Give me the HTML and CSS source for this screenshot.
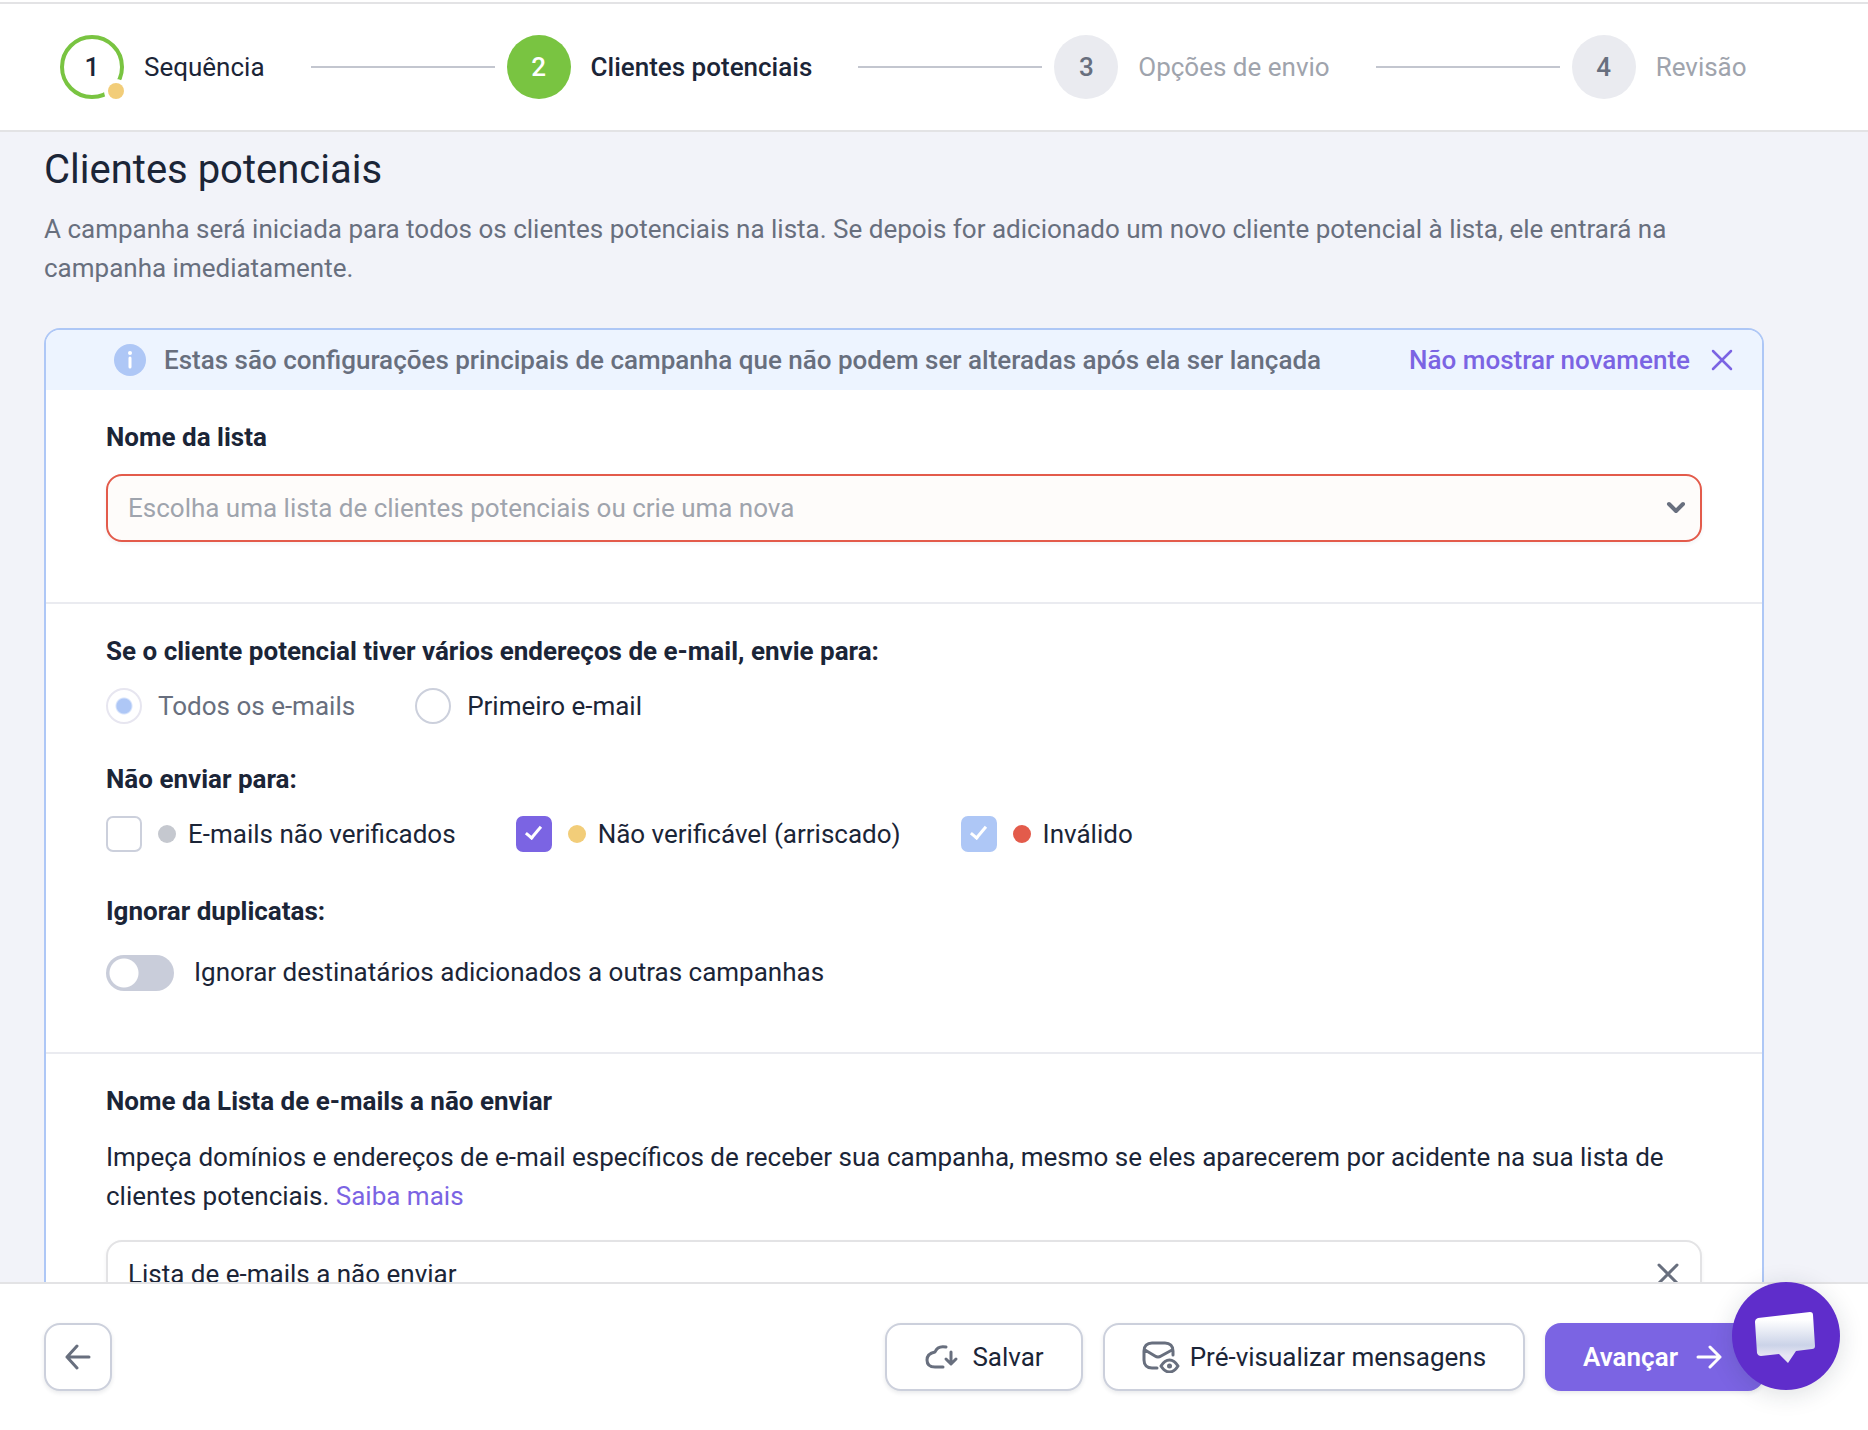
FILE: index.html
```html
<!DOCTYPE html>
<html lang="pt-BR">
<head>
  <meta charset="UTF-8">
  <meta name="viewport" content="width=device-width, initial-scale=1.0">
  <title>Clientes potenciais</title>
  <link rel="stylesheet" href="styles.css">
</head>
<body>
  <header class="steps">
    <a href="#" class="step done">
      <span class="step-number">1</span>
      <span class="step-name">Sequência</span>
    </a>
    <span class="step-line"></span>
    <a href="#" class="step current">
      <span class="step-number">2</span>
      <span class="step-name">Clientes potenciais</span>
    </a>
    <span class="step-line"></span>
    <a href="#" class="step">
      <span class="step-number">3</span>
      <span class="step-name">Opções de envio</span>
    </a>
    <span class="step-line"></span>
    <a href="#" class="step">
      <span class="step-number">4</span>
      <span class="step-name">Revisão</span>
    </a>
  </header>

  <main class="content">
    <h1>Clientes potenciais</h1>
    <p class="intro">A campanha será iniciada para todos os clientes potenciais na lista. Se depois for adicionado um novo cliente potencial à lista, ele entrará na campanha imediatamente.</p>

    <form class="card">
      <div class="notice">
        <svg class="info-icon" viewBox="0 0 32 32" width="32" height="32">
          <circle cx="16" cy="16" r="16" fill="#aec7f6"/>
          <circle cx="16" cy="9" r="2" fill="#fff"/>
          <path d="M16 14v9" fill="none" stroke="#fff" stroke-width="3" stroke-linecap="round"/>
        </svg>
        <p>Estas são configurações principais de campanha que não podem ser alteradas após ela ser lançada</p>
        <a href="#">Não mostrar novamente</a>
        <button type="button" class="icon-button" aria-label="Fechar">
          <svg viewBox="0 0 24 24" width="24" height="24"><path d="M3 3l18 18M21 3L3 21" fill="none" stroke="#7b64e3" stroke-width="2.500" stroke-linecap="round"/></svg>
        </button>
      </div>

      <section class="section">
        <label class="title" for="lead-list">Nome da lista</label>
        <div class="select-wrap">
          <select id="lead-list" class="field error" required>
            <option value="">Escolha uma lista de clientes potenciais ou crie uma nova</option>
          </select>
          <svg class="chevron" viewBox="0 0 20 14" width="20" height="14"><path d="M3 3l7 7 7-7" fill="none" stroke="#686f7e" stroke-width="4" stroke-linecap="round" stroke-linejoin="round"/></svg>
        </div>
      </section>

      <section class="section">
        <h2 class="title">Se o cliente potencial tiver vários endereços de e-mail, envie para:</h2>
        <div class="options">
          <label class="option muted"><input type="radio" name="send-to" checked disabled>Todos os e-mails</label>
          <label class="option"><input type="radio" name="send-to">Primeiro e-mail</label>
        </div>

        <h2 class="title">Não enviar para:</h2>
        <div class="options checks">
          <label class="option"><input type="checkbox"><span class="dot gray"></span>E-mails não verificados</label>
          <label class="option"><input type="checkbox" checked><span class="dot yellow"></span>Não verificável (arriscado)</label>
          <label class="option"><input type="checkbox" checked disabled><span class="dot red"></span>Inválido</label>
        </div>

        <h2 class="title">Ignorar duplicatas:</h2>
        <label class="toggle"><input type="checkbox" role="switch">Ignorar destinatários adicionados a outras campanhas</label>
      </section>

      <section class="section">
        <label class="title" for="block-list">Nome da Lista de e-mails a não enviar</label>
        <p class="text">Impeça domínios e endereços de e-mail específicos de receber sua campanha, mesmo se eles aparecerem por acidente na sua lista de clientes potenciais. <a href="#">Saiba mais</a></p>
        <div class="select-wrap">
          <input type="text" id="block-list" class="field" value="Lista de e-mails a não enviar">
          <button type="button" class="icon-button clear" aria-label="Limpar">
            <svg viewBox="0 0 24 24" width="24" height="24"><path d="M3 3l18 18M21 3L3 21" fill="none" stroke="#686f7e" stroke-width="3" stroke-linecap="round"/></svg>
          </button>
        </div>
      </section>
    </form>
  </main>

  <footer class="actions">
    <button type="button" class="btn back" aria-label="Voltar">
      <svg viewBox="0 0 26 26" width="26" height="26"><path d="M24 13H2M12 2L2 13l10 11" fill="none" stroke="#686f7e" stroke-width="3" stroke-linecap="round" stroke-linejoin="round"/></svg>
    </button>
    <button type="button" class="btn">
      <svg viewBox="0 0 38 28" width="38" height="28"><path d="M22 4c-5-1-9 0-11 5-5 1-8 4-8 8 0 5 3 7 8 7h8M27 9v11M22 16l5 5 5-5" fill="none" stroke="#686f7e" stroke-width="3" stroke-linecap="round" stroke-linejoin="round"/></svg>
      Salvar
    </button>
    <button type="button" class="btn">
      <svg viewBox="0 0 38 32" width="38" height="32">
        <g fill="none" stroke="#686f7e" stroke-width="3" stroke-linecap="round" stroke-linejoin="round">
          <path d="M15 27h-5c-5 0-8-3-8-8v-9c0-5 3-8 8-8h13c5 0 8 3 8 8v4M3 9l10 6q3 2 6 0l11-6"/>
          <path d="M19 25c5-8 12-8 17 0-5 8-12 8-17 0z"/>
        </g>
        <circle cx="27.500" cy="25" r="2.500" fill="#686f7e"/>
      </svg>
      Pré-visualizar mensagens
    </button>
    <button type="submit" class="btn primary">
      Avançar
      <svg viewBox="0 0 26 26" width="26" height="26"><path d="M2 13h22M14 3l10 10-10 10" fill="none" stroke="#fff" stroke-width="3" stroke-linecap="round" stroke-linejoin="round"/></svg>
    </button>
  </footer>

  <button type="button" class="chat" aria-label="Chat">
    <svg viewBox="0 0 108 108" width="108" height="108">
      <defs>
        <linearGradient id="bubble" x1="0" y1="0" x2="0" y2="1">
          <stop offset="0.150" stop-color="#fff"/>
          <stop offset="0.650" stop-color="#cbd3e8"/>
          <stop offset="0.850" stop-color="#e6e6f3"/>
        </linearGradient>
      </defs>
      <path d="M26 36l52-6q3 0 3 3l2 31q0 3-3 3l-16 2-8 12-9-9-18 2q-3 0-4-3l-2-31q0-3 3-4z" fill="url(#bubble)"/>
    </svg>
  </button>
</body>
</html>
```
FILE: styles.css
```css
* {
  box-sizing: border-box;
}

body {
  font-family: Roboto, "Liberation Sans", sans-serif;
  font-size: 26px;
  line-height: 39px;
  color: #1b2537;
  background-color: #f2f3f9;
  margin: 0;
  display: flex;
  flex-direction: column;
  height: 100vh;
}

h1,
h2,
p {
  margin: 0;
}

a {
  color: #7b64e3;
  text-decoration: none;
}

button,
input,
select {
  font: inherit;
  color: inherit;
  margin: 0;
}

button {
  cursor: pointer;
}

svg {
  display: block;
  flex: none;
}

/* steps */
.steps {
  display: flex;
  align-items: center;
  flex: none;
  margin-top: 2px;
  padding: 31px 60px;
  background-color: #fff;
  border-top: 2px solid #e3e3e5;
  border-bottom: 2px solid #e3e3e5;
  box-shadow: 0 -2px 0 #fff;
}

.step {
  display: flex;
  align-items: center;
  gap: 20px;
  color: #9fa4ad;
  white-space: nowrap;
}

.step-number {
  position: relative;
  display: flex;
  align-items: center;
  justify-content: center;
  width: 64px;
  height: 64px;
  border-radius: 50%;
  background-color: #eaebf0;
  color: #686f7e;
  font-weight: 500;
}

.step.done {
  color: #1b2537;
}

.step.done .step-number {
  background-color: #fff;
  border: 4px solid #79c441;
  color: #1b2537;
}

.step.done .step-number::after {
  content: "";
  position: absolute;
  right: -4px;
  bottom: -4px;
  width: 16px;
  height: 16px;
  border-radius: 50%;
  background-color: #f2cd79;
  box-shadow: 0 0 0 4px #fff;
}

.step.current {
  color: #1b2537;
  font-weight: 500;
}

.step.current .step-number {
  background-color: #79c441;
  color: #fff;
}

.step-line {
  flex: 0 1 184px;
  height: 2px;
  margin: 0 12px 0 46px;
  background-color: #c3c6cf;
}

/* content */
.content {
  flex: 1;
  min-height: 0;
  overflow: hidden;
  padding: 13px 104px 0 44px;
}

h1 {
  font-size: 40px;
  font-weight: 400;
  line-height: 50px;
}

.intro {
  margin: 15px 0 40px;
  color: #686f7e;
}

.card {
  background-color: #fff;
  border: 2px solid #aec7f6;
  border-radius: 16px;
  overflow: hidden;
}

.notice {
  display: flex;
  align-items: center;
  height: 60px;
  padding: 0 28px 0 68px;
  background-color: #edf4ff;
  color: #686f7e;
  font-weight: 500;
}

.notice p {
  flex: 1;
  margin-left: 18px;
}

.icon-button {
  padding: 0;
  border: none;
  background: none;
}

.notice .icon-button {
  margin-left: 20px;
}

.section {
  padding: 28px 60px 60px;
}

.section + .section {
  border-top: 2px solid #eaebf0;
}

.title {
  display: block;
  font-size: 26px;
  font-weight: 700;
  line-height: 39px;
}

.select-wrap {
  position: relative;
  margin-top: 17px;
}

.field {
  display: block;
  width: 100%;
  height: 68px;
  padding: 0 80px 0 20px;
  border: 2px solid #e3e3e5;
  border-radius: 16px;
  background-color: #fff;
  box-shadow: 0 2px 4px rgba(27, 37, 55, 0.05);
  appearance: none;
}

.field.error {
  border-color: #e35b4b;
  background-color: #fefcfa;
  color: #9fa4ad;
}

.chevron {
  position: absolute;
  top: 27px;
  right: 16px;
}

.clear {
  position: absolute;
  top: 22px;
  right: 22px;
}

.options {
  display: flex;
  flex-wrap: wrap;
  gap: 16px 60px;
  margin: 17px 0 36px;
}

.checks {
  margin-bottom: 40px;
}

.option {
  display: flex;
  align-items: center;
  height: 36px;
}

.option input {
  appearance: none;
  width: 36px;
  height: 36px;
  margin-right: 16px;
  border: 2px solid #ccd0dc;
  background: #fff center no-repeat;
}

.option input[type="radio"] {
  border-radius: 50%;
}

.option input[type="radio"]:checked {
  border-color: #e7e6f0;
  background-image: radial-gradient(circle, #aec7f6 7px, transparent 9px);
}

.option input[type="checkbox"] {
  position: relative;
  border-radius: 7px;
}

.option input[type="checkbox"]:checked {
  border-color: #7b64e3;
  background-color: #7b64e3;
}

.option input[type="checkbox"]:checked:disabled {
  border-color: #aec7f6;
  background-color: #aec7f6;
}

.option input[type="checkbox"]:checked::after {
  content: "";
  position: absolute;
  left: 11px;
  top: 5px;
  width: 9px;
  height: 16px;
  border: solid #fff;
  border-width: 0 3px 3px 0;
  box-sizing: border-box;
  transform: rotate(40deg);
}

.muted {
  color: #686f7e;
}

.dot {
  width: 18px;
  height: 18px;
  margin-right: 12px;
  border-radius: 50%;
}

.gray {
  background-color: #c5c8cf;
}

.yellow {
  background-color: #f2cd79;
}

.red {
  background-color: #e35b4b;
}

.toggle {
  display: flex;
  align-items: center;
  gap: 20px;
  margin-top: 22px;
}

.toggle input {
  appearance: none;
  width: 68px;
  height: 36px;
  border-radius: 18px;
  background: #c9cdda radial-gradient(circle at 18px 18px, #fff 14px, transparent 15px);
}

.text {
  margin: 17px 0 24px;
}

/* footer */
.actions {
  display: flex;
  gap: 20px;
  flex: none;
  padding: 39px 104px 39px 44px;
  background-color: #fff;
  border-top: 2px solid #e3e3e5;
}

.btn {
  display: flex;
  align-items: center;
  gap: 10px;
  height: 68px;
  padding: 0 37px;
  border: 2px solid #ccd0dc;
  border-radius: 16px;
  background-color: #fff;
  box-shadow: 0 2px 4px rgba(27, 37, 55, 0.1);
  white-space: nowrap;
}

.btn.back {
  width: 68px;
  justify-content: center;
  margin-right: auto;
  padding: 0;
}

.btn.primary {
  gap: 18px;
  padding: 0 40px 0 36px;
  border-color: #7b64e3;
  background-color: #7b64e3;
  color: #fff;
  font-weight: 600;
}

.chat {
  position: fixed;
  right: 28px;
  bottom: 40px;
  width: 108px;
  height: 108px;
  padding: 0;
  border: none;
  border-radius: 50%;
  background-color: #5f2dcb;
  box-shadow: 0 4px 24px rgba(27, 37, 55, 0.15);
}
```
